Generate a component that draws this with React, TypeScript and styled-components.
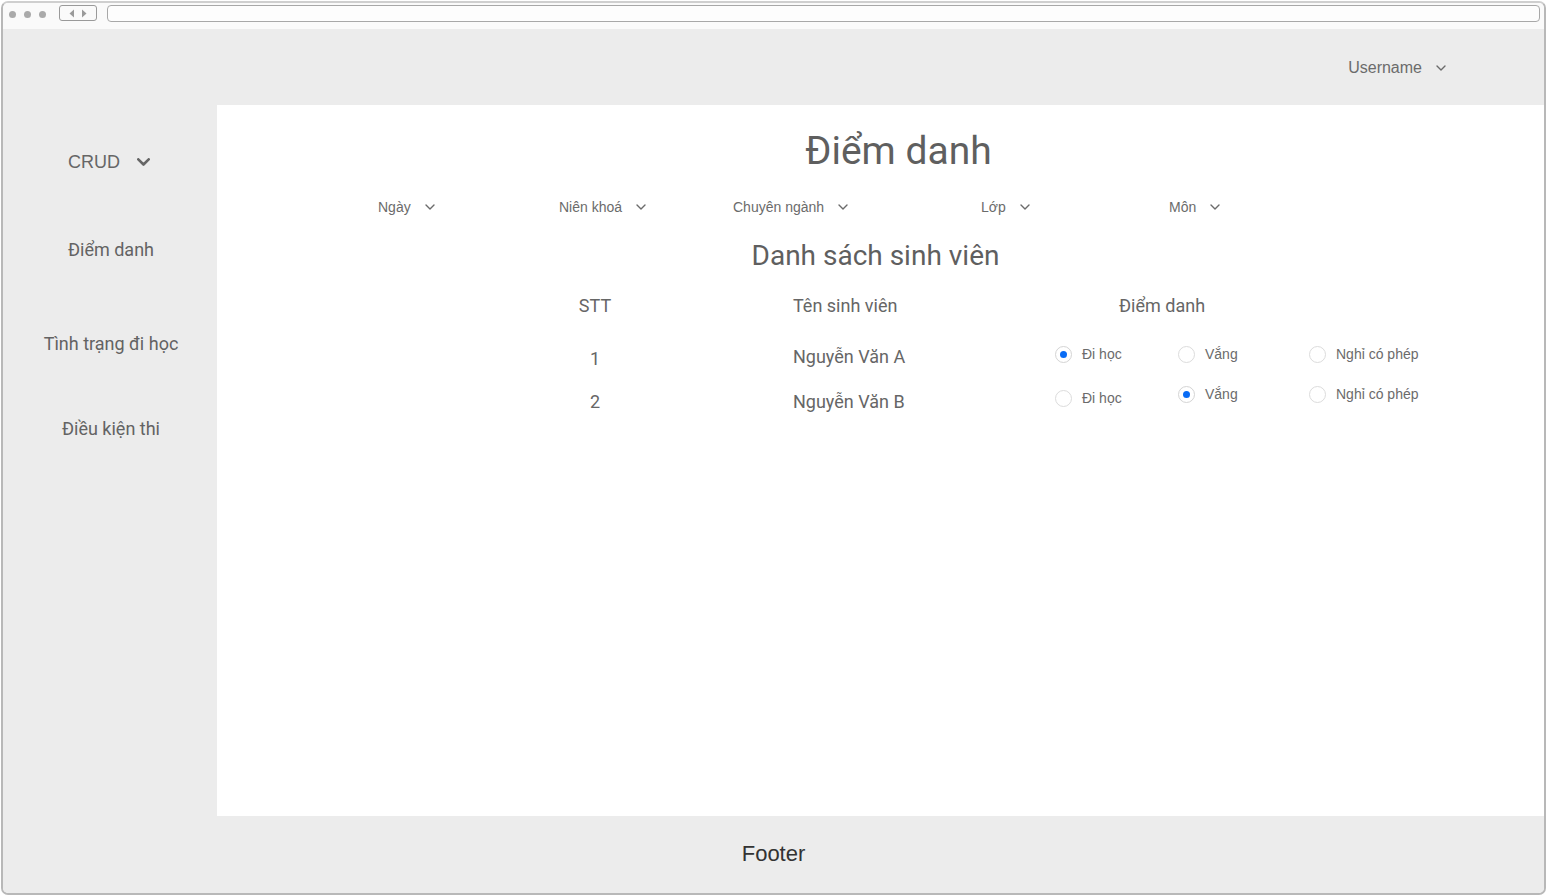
import React from "react";
import styled, { createGlobalStyle } from "styled-components";

const Global = createGlobalStyle`
  html, body { margin: 0; padding: 0; background: #ffffff; }
  * { box-sizing: border-box; }
`;

const PLEX = `"Roboto", "Noto Sans", sans-serif`;
const ARIAL = `"Liberation Sans", Arial, sans-serif`;

const Window = styled.div`
  margin: 1px 3px 0 1px;
  height: 894px;
  border: 2px solid #b8b8b8;
  border-top-color: #cfcfcf;
  border-radius: 7px;
  display: flex;
  flex-direction: column;
  overflow: hidden;
  background: #fafafa;
`;

const Toolbar = styled.div`
  height: 26px;
  flex: none;
  display: flex;
  align-items: flex-start;
  padding: 2px 4px 0 6px;
  background: #fafafa;
`;

const Dots = styled.div`
  display: flex;
  gap: 8px;
  margin-top: 6px;
`;

const Dot = styled.span`
  width: 7px;
  height: 7px;
  border-radius: 50%;
  background: #aaaaaa;
`;

const NavBox = styled.div`
  margin-left: 13px;
  width: 38px;
  height: 16px;
  border: 1px solid #9a9a9a;
  border-radius: 3px;
  display: flex;
  align-items: center;
  justify-content: center;
  gap: 6px;
`;

const Address = styled.div`
  margin-left: 10px;
  flex: 1;
  height: 17px;
  border: 1.5px solid #a8a8a8;
  border-radius: 4px;
  background: #fdfdfd;
`;

const Screen = styled.div`
  flex: 1;
  display: grid;
  grid-template-columns: 214px 1fr;
  grid-template-rows: 76px 711px 1fr;
  background: #ececec;
`;

const Header = styled.header`
  grid-column: 1 / 3;
  display: flex;
  align-items: center;
  justify-content: flex-end;
  padding-right: 98px;
  padding-top: 1px;
  font-family: ${ARIAL};
  font-size: 16px;
  color: #6b6b6b;
  gap: 14px;
`;

const Sidebar = styled.nav`
  display: flex;
  flex-direction: column;
  align-items: center;
  padding-top: 46px;
  padding-left: 2px;
`;

const NavItem = styled.div<{ $h: number }>`
  height: ${(p) => p.$h}px;
  display: flex;
  align-items: flex-start;
  gap: 17px;
  font-family: ${PLEX};
  font-size: 18px;
  color: #636363;
  white-space: nowrap;
`;

const CrudRow = styled.div`
  height: 88px;
  display: flex;
  align-items: flex-start;
  gap: 17px;
  margin-left: -4px;
`;

const CrudLabel = styled.span`
  font-family: ${ARIAL};
  font-size: 18px;
  line-height: 22px;
  color: #666666;
`;

const ChevronSlot = styled.span`
  height: 22px;
  display: flex;
  align-items: center;
  color: #666666;
`;

const Main = styled.main`
  background: #ffffff;
  display: flex;
  flex-direction: column;
`;

const Title = styled.h1`
  margin: 23px 0 0 0;
  text-align: center;
  padding-left: 36px;
  font-family: ${PLEX};
  font-weight: 400;
  font-size: 39px;
  line-height: 46px;
  color: #5f5f5f;
`;

const Filters = styled.div`
  display: grid;
  grid-template-columns: 181px 174px 248px 188px auto;
  margin: 21px 0 0 161px;
  height: 24px;
  align-items: center;
`;

const Filter = styled.div`
  display: flex;
  align-items: center;
  gap: 14px;
  font-family: ${ARIAL};
  font-size: 14px;
  color: #6b6b6b;
`;

const SubTitle = styled.h2`
  margin: 21px 10px 0 0;
  text-align: center;
  font-family: ${PLEX};
  font-weight: 400;
  font-size: 28px;
  line-height: 32px;
  color: #5f5f5f;
`;

const Table = styled.div`
  display: grid;
  grid-template-columns: 100px 148px 262px 123px 131px auto;
  margin: 15px 0 0 328px;
  font-family: ${PLEX};
  font-size: 18px;
  color: #666666;
`;

const Row = styled.div<{ $h: number }>`
  display: contents;
  & > * {
    height: ${(p) => p.$h}px;
    display: flex;
    align-items: center;
  }
`;

const Cell = styled.div<{ $pt?: number; $center?: boolean }>`
  padding-top: ${(p) => p.$pt ?? 0}px;
  justify-content: ${(p) => (p.$center ? "center" : "flex-start")};
`;

const AttHead = styled.div`
  grid-column: 4 / 7;
  padding-left: 64px;
`;

const Option = styled.label<{ $dy?: number }>`
  display: flex;
  align-items: center;
  gap: 10px;
  font-family: ${ARIAL};
  font-size: 14px;
  color: #6b6b6b;
  transform: translateY(${(p) => p.$dy ?? 0}px);
`;

const Radio = styled.span<{ $on?: boolean }>`
  width: 17px;
  height: 17px;
  border-radius: 50%;
  border: 1px solid ${(p) => (p.$on ? "#d4d4d4" : "#dcdcdc")};
  background: #fff;
  display: flex;
  align-items: center;
  justify-content: center;
  flex: none;
  &::after {
    content: "";
    width: 7px;
    height: 7px;
    border-radius: 50%;
    background: ${(p) => (p.$on ? "#0a6cf5" : "transparent")};
  }
`;

const Footer = styled.footer`
  grid-column: 1 / 3;
  display: flex;
  align-items: center;
  justify-content: center;
  padding-bottom: 2px;
  font-family: ${ARIAL};
  font-size: 22px;
  color: #333333;
`;

const Chevron = ({ size = 10, stroke = 1.5 }: { size?: number; stroke?: number }) => (
  <svg width={size} height={size * 0.6} viewBox="0 0 10 6" fill="none">
    <path d="M1 1l4 4 4-4" stroke="currentColor" strokeWidth={stroke} strokeLinecap="round" strokeLinejoin="round" />
  </svg>
);

const Tri = ({ dir }: { dir: "l" | "r" }) => (
  <svg width="6" height="9" viewBox="0 0 6 9">
    <path d={dir === "l" ? "M5 0.5L0.5 4.5 5 8.5z" : "M1 0.5L5.5 4.5 1 8.5z"} fill="#9a9a9a" />
  </svg>
);

const students = [
  { id: 1, name: "Nguyễn Văn A", sel: 0, h: 53, textPt: 18, namePt: 14, radioPt: [9, 9, 9] },
  { id: 2, name: "Nguyễn Văn B", sel: 1, h: 42, textPt: 8, namePt: 8, radioPt: [2, -3, -3] },
];
const options = ["Đi học", "Vắng", "Nghỉ có phép"];

export default function App() {
  return (
    <>
      <Global />
      <Window>
        <Toolbar>
          <Dots>
            <Dot />
            <Dot />
            <Dot />
          </Dots>
          <NavBox>
            <Tri dir="l" />
            <Tri dir="r" />
          </NavBox>
          <Address />
        </Toolbar>
        <Screen>
          <Header>
            <span>Username</span>
            <Chevron size={10} stroke={1.4} />
          </Header>
          <Sidebar>
            <CrudRow>
              <CrudLabel>CRUD</CrudLabel>
              <ChevronSlot>
                <Chevron size={13} stroke={2} />
              </ChevronSlot>
            </CrudRow>
            <NavItem $h={94}>Điểm danh</NavItem>
            <NavItem $h={85}>Tình trạng đi học</NavItem>
            <NavItem $h={40}>Điều kiện thi</NavItem>
          </Sidebar>
          <Main>
            <Title>Điểm danh</Title>
            <Filters>
              {["Ngày", "Niên khoá", "Chuyên ngành", "Lớp", "Môn"].map((f) => (
                <Filter key={f}>
                  <span>{f}</span>
                  <Chevron size={10} stroke={1.4} />
                </Filter>
              ))}
            </Filters>
            <SubTitle>Danh sách sinh viên</SubTitle>
            <Table>
              <Row $h={36}>
                <Cell $center>STT</Cell>
                <Cell />
                <Cell>Tên sinh viên</Cell>
                <AttHead>Điểm danh</AttHead>
              </Row>
              {students.map((s) => (
                <Row key={s.id} $h={s.h}>
                  <Cell $center $pt={s.textPt}>{s.id}</Cell>
                  <Cell />
                  <Cell $pt={s.namePt}>{s.name}</Cell>
                  {options.map((o, i) => (
                    <Cell key={o} $pt={s.radioPt[i] > 0 ? s.radioPt[i] : 0}>
                      <Option $dy={s.radioPt[i] < 0 ? s.radioPt[i] : 0}>
                        <Radio $on={s.sel === i} />
                        {o}
                      </Option>
                    </Cell>
                  ))}
                </Row>
              ))}
            </Table>
          </Main>
          <Footer>Footer</Footer>
        </Screen>
      </Window>
    </>
  );
}
